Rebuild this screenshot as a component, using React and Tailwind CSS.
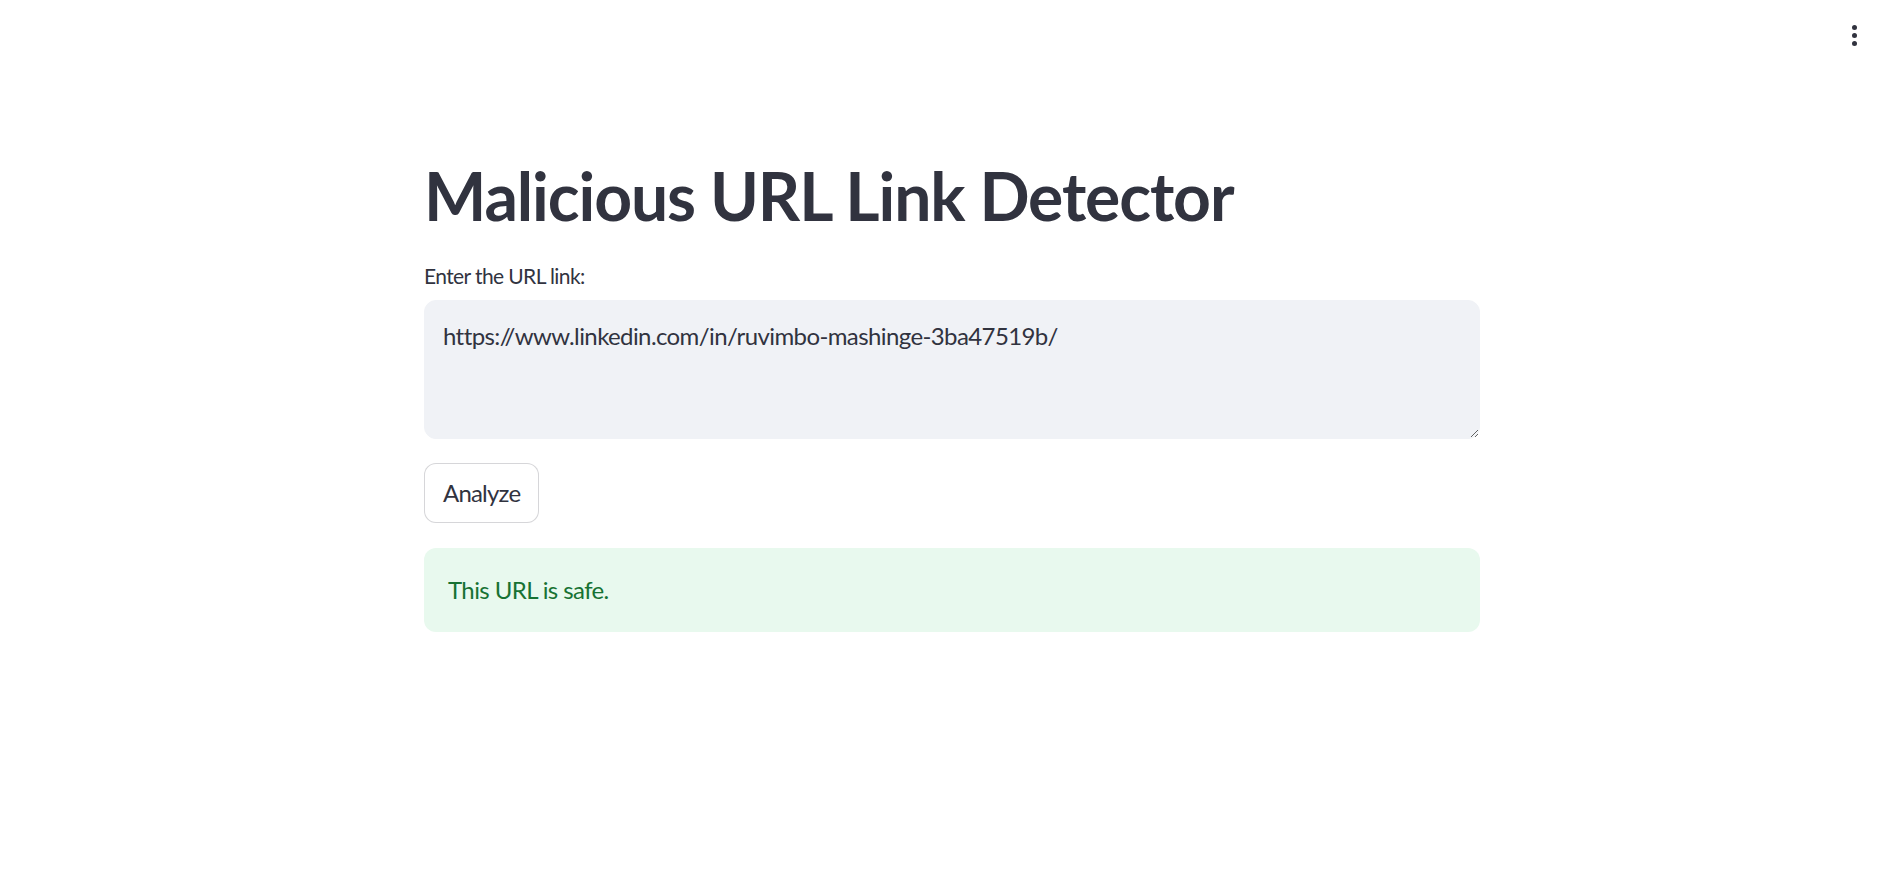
import React from "react";

export default function App() {
  const font = { fontFamily: '"Source Sans Pro", Lato, "Noto Sans", sans-serif' };
  return (
    <div className="relative min-h-screen w-full bg-white text-[#31333f]" style={font}>
      <button className="absolute right-[30px] top-[22px] flex h-[26px] w-[18px] flex-col items-center justify-center gap-[3px]">
        <span className="block h-[5px] w-[5px] rounded-full bg-[#31333f]"></span>
        <span className="block h-[5px] w-[5px] rounded-full bg-[#31333f]"></span>
        <span className="block h-[5px] w-[5px] rounded-full bg-[#31333f]"></span>
      </button>
      <div className="flex justify-center pl-[11px] pt-[156px]">
        <div className="flex w-[1056px] flex-col">
          <h1 className="m-0 text-[66px] font-bold leading-[1.2] tracking-[-1.1px] text-[#31333f]">
            Malicious URL Link Detector
          </h1>
          <label className="mt-[23px] flex h-[36px] items-center text-[21px] leading-[1.6] tracking-[-0.6px]">
            Enter the URL link:
          </label>
          <textarea
            className="mt-[6px] h-[139px] w-full resize-y rounded-[12px] border border-[#f0f2f6] bg-[#f0f2f6] px-[18px] py-[18px] text-[24px] leading-[1.4] tracking-[-0.6px] text-[#31333f] outline-none"
            style={font}
            defaultValue="https://www.linkedin.com/in/ruvimbo-mashinge-3ba47519b/"
          />
          <div className="mt-[24px]">
            <button className="h-[60px] rounded-[12px] border border-[rgba(49,51,63,0.2)] bg-white px-[18px] text-[24px] tracking-[-0.8px] text-[#31333f]">
              Analyze
            </button>
          </div>
          <div className="mt-[25px] flex h-[84px] items-center rounded-[12px] bg-[#e8f9ee] px-[24px] text-[24px] tracking-[-0.6px] text-[#177233]">
            This URL is safe.
          </div>
        </div>
      </div>
    </div>
  );
}
